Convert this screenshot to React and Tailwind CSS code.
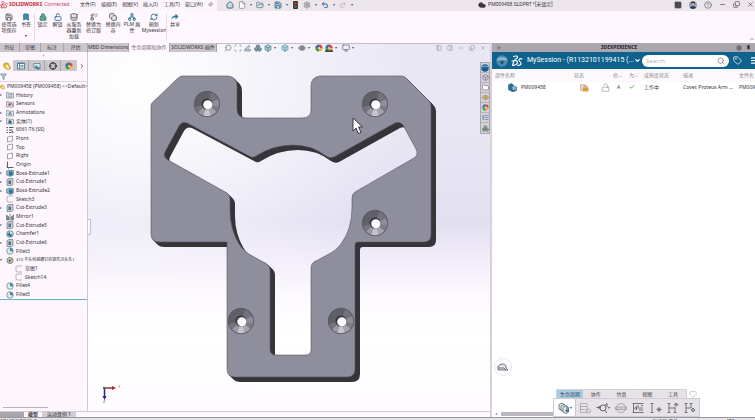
import React from "react";
import {
  Home, File, FolderOpen, Save, Undo2, Redo2, Pin, Search, Tag, Menu, ChevronDown, ChevronRight,
  Bookmark, Lock, LockOpen, RefreshCw, Database, Replace, Copy, Network, Monitor, Eye, Box,
  Boxes, Heart, Minus, X, CircleHelp, Cloud, Check, Crosshair, Filter, Settings,
  ListTree, PanelLeft, PanelRight, ChevronUp, SquareTerminal, ChevronsRight, Folder, Scan,
} from "lucide-react";

const BLUE = "#2f7f9f";

const MENUS = ["文件(F)", "编辑(E)", "视图(V)", "插入(I)", "工具(T)", "窗口(W)"];

function Caret() {
  return <span className="text-[4px] leading-none text-[#55505a]">▾</span>;
}

function TrafficLight() {
  return (
    <svg viewBox="0 0 6 10" className="h-2 w-[5px]">
      <rect width="6" height="10" rx="1" fill="#33302f" />
      <circle cx="3" cy="3" r="1.8" fill="#c3362e" />
      <circle cx="3" cy="7" r="1.8" fill="#3a7c3a" />
    </svg>
  );
}

function Ball({ className, scene }) {
  return (
    <svg viewBox="0 0 10 10" className={className}>
      <path d="M5 5V.5A4.500 4.500 0 0 1 9.500 5Z" fill="#d9483b" />
      <path d="M5 5H9.500A4.500 4.500 0 0 1 5 9.500Z" fill="#e8b63e" />
      <path d="M5 5V9.500A4.500 4.500 0 0 1 .5 5Z" fill="#3f9c55" />
      <path d="M5 5H.5A4.500 4.500 0 0 1 5 .5Z" fill="#3a6ea8" />
      <circle cx="5" cy="5" r="1.400" fill="#fff" opacity=".7" />
      {scene && <path d="M0 10V8l2-1 3 1 3-1 2 1v2Z" fill="#4a4d52" />}
    </svg>
  );
}

function DsLogo({ className, color }) {
  return (
    <svg viewBox="0 0 24 24" className={className} fill="none" stroke={color} strokeWidth="2.300" strokeLinecap="round" strokeLinejoin="round">
      <path d="M5 3c4-2 9-1 8 2-.6 2-3 3-5 3.500" />
      <path d="M6 11 3 21c5 0 10-3 10-6.500C13 11 8 10 2 12" />
      <path d="M22 8c-4-1.500-7 0-6 3 .7 2 4 3 4 6s-3 4-7 3.500" />
    </svg>
  );
}

function PartIcon({ className }) {
  return (
    <svg viewBox="0 0 12 12" className={className}>
      <path d="M1 3 4 1l4 1 1 3 2 2v3L8 11.500 4 10 1 7Z" fill="#e3b530" stroke="#a87a16" strokeWidth=".7" />
      <path d="m4 5 3-1 1 3 2 1-2 2-3-1Z" fill="#fff3b0" />
    </svg>
  );
}

function TitleBar() {
  return (
    <header className="flex h-[11px] shrink-0 items-center bg-[#ece6ec] pb-[2px] text-[5px] leading-none text-[#3a363c]">
      <div className="-mb-[2px] flex h-[11px] w-[217px] shrink-0 items-center bg-[#fdf5fc] pb-[2px]">
        <DsLogo className="h-2 w-2 shrink-0" color="#c1272d" />
        <span className="ml-px font-bold text-[#c22a35]">SOLIDWORKS</span>
        <span className="ml-[2px] text-[#c24a58]">Connected</span>
        <nav className="ml-auto flex gap-1 pr-[6px]">
          {MENUS.map((m) => (
            <button key={m} className="w-[17px] whitespace-nowrap text-left">{m}</button>
          ))}
        </nav>
        <Pin className="mr-1 h-[5px] w-[5px] rotate-45" />
      </div>
      <div className="flex items-center gap-1 pl-[9px]">
        <Home className="h-2 w-2 fill-[#c8dbe4] text-[#38566a]" strokeWidth={2.5} />
        <File className="h-2 w-2 fill-white text-[#77727a]" /><Caret />
        <FolderOpen className="h-2 w-2 fill-[#d4e2e8] text-[#4b7284]" /><Caret />
        <Save className="h-2 w-2 fill-[#b8d4e0] text-[#2d6d8c]" strokeWidth={2.5} /><Caret />
        <span className="mx-px"><TrafficLight /></span>
        <Settings className="h-2 w-2 fill-[#c3bec6] text-[#8b868e]" /><Caret />
        <Undo2 className="h-2 w-2 text-[#2f6f99]" strokeWidth={3} /><Caret />
        <Redo2 className="h-2 w-2 text-[#c2bcc4]" strokeWidth={3} /><Caret />
      </div>
      <div className="flex flex-1 items-center gap-[2px] pl-[125px]">
        <Cloud className="h-2 w-2 fill-[#3a363c]" />
        <span className="whitespace-nowrap font-[Roboto,'Noto_Sans_CJK_SC',sans-serif]">PM009458.SLDPRT *[未锁定]</span>
      </div>
      <div className="flex items-center gap-[7px] pr-px">
        <SquareTerminal className="h-2 w-2 fill-[#4a474d] text-[#4a474d]" />
        <svg viewBox="0 0 16 16" className="h-2 w-2">
          <circle cx="8" cy="8" r="8" fill="#8ba4bf" />
          <path d="M2 14c1-5 11-5 12 0l-6 2Z" fill="#26385a" />
          <circle cx="8" cy="6" r="3" fill="#d6a283" />
          <path d="M4 7c-1-8 9-8 8 0l-2-3H6Z" fill="#2b2325" />
        </svg>
        <CircleHelp className="h-2 w-2 text-[#656068]" />
        <Minus className="h-[7px] w-[7px]" />
        <Copy className="h-[7px] w-[7px] -scale-x-100 rotate-180" />
        <X className="h-[7px] w-[7px]" />
      </div>
    </header>
  );
}

const RIBBON = [
  { icon: Save, lines: ["使用选", "项保存"], w: "w-[18px]", gray: true },
  { icon: Bookmark, lines: ["书签"], w: "w-4", fill: true, caret: true, sep: true },
  { icon: Lock, lines: ["锁定"], w: "w-[15px]", green: true },
  { icon: LockOpen, lines: ["解锁"], w: "w-[15px]" },
  { icon: Database, lines: ["从服务", "器重新", "加载"], w: "w-[18px]", gray: true },
  { icon: Replace, lines: ["替换为", "修订版"], w: "w-[21px]", gray: true },
  { icon: Copy, lines: ["替换内", "容"], w: "w-[18px]", gray: true },
  { icon: Network, lines: ["PLM 属", "性"], w: "w-5" },
  { icon: RefreshCw, lines: ["刷新", "Mysession"], w: "w-6", sep: true },
  { icon: null, lines: ["共享"], w: "w-4" },
];

function Ribbon() {
  return (
    <section className="flex h-8 shrink-0 bg-[#fef7fe] pt-[2px] text-[5px] leading-[6px] text-[#37333a]">
      {RIBBON.map((r) => (
        <React.Fragment key={r.lines.join("")}>
          <button className={`${r.w} flex shrink-0 flex-col items-center`}>
            {r.icon ? (
              <r.icon
                className={`h-2 w-2 shrink-0 ${r.green ? "fill-[#63a86c] text-[#2f7f9f]" : r.gray ? "fill-[#dfe3e8] text-[#57535b]" : "text-[#256b88]"} ${r.fill ? "fill-[#3a8fb4]" : ""}`}
                strokeWidth={2.5}
              />
            ) : (
              <svg viewBox="0 0 16 16" className="h-2 w-2 shrink-0">
                <path d="M1 14c0-6 3-9 8-9V1l6 6-6 6V9c-4 0-6 1-8 5Z" fill={BLUE} />
              </svg>
            )}
            {r.lines.map((l) => <span key={l} className="whitespace-nowrap">{l}</span>)}
            {r.caret && <span className="mt-[7px] text-[4px] leading-none">▾</span>}
          </button>
          {r.sep && <i className="h-7 w-px shrink-0 bg-[#e3dbe4]" />}
        </React.Fragment>
      ))}
      <div className="flex flex-1 items-end justify-end pb-px"><ChevronUp className="h-[6px] w-[6px]" /></div>
    </section>
  );
}

const TABS = [
  ["特征", "w-5"], ["草图", "w-[21px]"], ["标注", "w-[23px]"], ["评估", "w-6"],
  ["MBD Dimensions", "w-[41px]"], ["生命周期和协作", "w-[41px]"], ["SOLIDWORKS 插件", "w-[47px]"],
];

function CommandTabs() {
  return (
    <div className="flex h-[9px] shrink-0 text-[5px] leading-none text-[#3c383f]">
      <div className="flex">
        {TABS.map(([t, w], i) => (
          <button key={t} className={`${w} whitespace-nowrap border-r border-[#aaa3ab] text-center ${i === 5 ? "bg-[#fef7fe] text-[#6c666e]" : "bg-[#cbc5cc]"}`}>{t}</button>
        ))}
      </div>
      <div className="flex flex-1 items-center gap-[2px] border-t border-[#c4bfc8] pl-[7px] text-[#7a8790]">
        <Search className="h-2 w-2 -scale-x-100" strokeWidth={2.5} />
        <Scan className="h-2 w-2" />
        <svg viewBox="0 0 16 16" className="h-2 w-2" fill="#c5d6dd" stroke="#6f8690" strokeWidth="1.300">
          <path d="M2 10 9 3l3 1-5 7ZM2 10l-1 4h12v-3H7" />
        </svg>
        <Boxes className="h-2 w-2 fill-[#a8bbc4] text-[#557584]" />
        <Box className="h-2 w-2 fill-[#a9ccd9] text-[#4b7b8d]" /><Caret />
        <Box className="ml-[3px] h-2 w-2 fill-[#b4d6e2] text-[#5a8ea3]" /><Caret />
        <Eye className="ml-[3px] h-2 w-2 fill-[#b8b5bd] text-[#4e4b52]" /><Caret />
        <Ball className="ml-[3px] h-2 w-2" />
        <Ball className="h-2 w-2" scene /><Caret />
        <Monitor className="ml-[3px] h-2 w-2 text-[#625e69]" /><Caret />
        <div className="ml-auto flex gap-1 pr-1 text-[#8e8997]">
          <PanelLeft className="h-[6px] w-[6px]" />
          <PanelRight className="ml-px h-[6px] w-[6px]" />
          <Minus className="ml-px h-[6px] w-[6px]" />
          <Copy className="ml-px h-[6px] w-[6px] -scale-x-100 rotate-180" />
          <X className="ml-px h-[6px] w-[6px]" />
        </div>
      </div>
    </div>
  );
}

const TREE = [
  ["folder", "History", 1], ["sensor", "Sensors"], ["note", "Annotations", 1], ["solid", "实体(1)", 1],
  ["material", "6061-T6 (SS)"], ["plane", "Front"], ["plane", "Top"], ["plane", "Right"], ["origin", "Origin"],
  ["boss", "Boss-Extrude1", 1], ["cut", "Cut-Extrude1", 1], ["boss", "Boss-Extrude2", 1], ["sketch", "Sketch3"],
  ["cut", "Cut-Extrude3", 1], ["mirror", "Mirror1"], ["cut", "Cut-Extrude5", 1], ["chamfer", "Chamfer1"],
  ["cut", "Cut-Extrude6", 1], ["fillet", "Fillet3"], ["hole", "#10 平头机械螺钉的锥形沉头孔1", 1],
  ["sketch", "草图1", 0, 1], ["sketch", "Sketch14", 0, 1], ["fillet", "Fillet4"], ["fillet", "Fillet5"],
];

const folderShape = <path d="M1 3h4l1 1.500h9V14H1Z" fill="#dfe0e4" stroke="#77777f" strokeWidth="1.200" />;

const TREE_ART = {
  folder: <>{folderShape}<circle cx="8" cy="9" r="3.200" fill="#fff" stroke="#4d7b92" strokeWidth="1.300" /><path d="M8 7v2l2 1" stroke="#4d7b92" fill="none" /></>,
  sensor: <>{folderShape}<circle cx="7" cy="9" r="2.600" fill="#b34b54" /><path d="M10 6l3 5" stroke="#555" strokeWidth="1.500" /></>,
  note: <>{folderShape}<path d="m5 12 3-6 3 6M6 10h4" fill="none" stroke="#2d7695" strokeWidth="1.500" /></>,
  solid: <>{folderShape}<path d="M5 7h6v6H5Z" fill="#226a8c" /></>,
  material: <path d="M1 3h3M1 8h3M1 13h3M6 3h9M6 8h7M6 13h5M12 10l2 4" stroke="#4b5d58" strokeWidth="2.200" />,
  plane: <path d="m3 4 10-2v10L3 14Z" fill="#fbfafc" stroke="#77757c" strokeWidth="1.300" />,
  origin: <path d="M3 1v12h12M1 11l4 4" fill="none" stroke="#44424a" strokeWidth="1.700" />,
  boss: <><path d="m1 4 5-2 9 1v9l-6 3-8-3Z" fill="#8fb4c4" stroke="#4b6875" /><path d="M6 5h7v8H6Z" fill="#257699" /></>,
  cut: <><path d="m2 3 4-2h8v12l-3 2H2Z" fill="#c9cbd1" stroke="#606670" strokeWidth="1.200" /><path d="M5 5h5v7H5Z" fill="#40788f" /></>,
  sketch: <path d="M14 2H5Q2 2 2 5v6q0 3 3 3h9" fill="none" stroke="#8e8991" strokeWidth="1.300" />,
  mirror: <><path d="M1 14V4l5 4v6ZM15 14V4l-5 4v6Z" fill="#7d8d96" stroke="#505860" /><path d="M8 1v14" stroke="#333" /></>,
  chamfer: <><circle cx="8" cy="8" r="6.500" fill="#dfe6ea" stroke="#4b6470" strokeWidth="1.500" /><path d="M2 9 8 3v5l5 1-4 5Z" fill="#267397" /></>,
  fillet: <><circle cx="8" cy="8" r="6.500" fill="#e3e7ea" stroke="#62757f" strokeWidth="1.300" /><path d="M8 2q6 0 6 7L8 8Z" fill="#3689a9" /></>,
  hole: <><circle cx="8" cy="9" r="6" fill="#cfd8de" stroke="#4d6470" strokeWidth="1.500" /><path d="m5 12 7-9 3 2-7 8Z" fill="#d99337" /><circle cx="7" cy="9" r="2" fill="#255f7b" /></>,
};

function FeatureTree() {
  return (
    <aside className="flex w-[88px] shrink-0 flex-col overflow-hidden border-r border-[#cfc8d2] bg-[#fdf6fd] text-[5px] text-[#37333a]">
      <div className="flex h-2 items-center justify-center text-[5px] leading-none text-[#8e8890]">•</div>
      <div className="flex h-[11px] shrink-0 bg-[#ccc6cd]">
        <button className="flex w-[13px] items-center justify-center bg-[#fdf6fd]"><PartIcon className="h-2 w-2" /></button>
        <button className="flex w-4 items-center justify-center border-r border-[#aaa4ac]">
          <svg viewBox="0 0 16 16" className="h-2 w-2"><path d="M1 2h14v12H1Z" fill="#f1f6f8" stroke="#37718c" strokeWidth="1.600" /><path d="M1 3h14M5 3v11M7 7h6M7 10h6" stroke="#37718c" strokeWidth="1.600" /></svg>
        </button>
        <button className="flex w-4 items-center justify-center border-r border-[#aaa4ac]">
          <svg viewBox="0 0 16 16" className="h-2 w-2"><path d="M2 3h12v9H2Z" fill="#e4edf1" stroke="#54717e" strokeWidth="1.400" /><path d="M3 11 7 6l3 4 5 3v2H8Z" fill="#4288a3" /></svg>
        </button>
        <button className="flex w-4 items-center justify-center border-r border-[#aaa4ac]"><Crosshair className="h-2 w-2 text-[#2e2b30]" strokeWidth={3} /></button>
        <button className="flex w-4 items-center justify-center"><Ball className="h-2 w-2" /></button>
        <button className="flex flex-1 items-center justify-center bg-[#fdf6fd]"><ChevronRight className="h-[6px] w-[6px]" strokeWidth={3} /></button>
      </div>
      <div className="flex h-[11px] shrink-0 items-center border-b border-[#ddd5de]">
        <Filter className="h-[7px] w-[7px] fill-[#a8ccd8] text-[#477888]" />
      </div>
      <div className="flex h-[9px] shrink-0 items-center gap-[2px] whitespace-nowrap">
        <PartIcon className="h-[6px] w-[5px] shrink-0" />PM009458 (PM009458) &lt;&lt;Default&gt;
      </div>
      <ul className="grid h-[209px] shrink-0 auto-rows-fr border-b border-[#6fb2c8]">
        {TREE.map(([kind, label, open, nested]) => (
          <li key={label} className={`flex items-center whitespace-nowrap leading-none ${nested ? "pl-[9px]" : ""} ${kind === "hole" ? "text-[4px]" : ""}`}>
            <span className="w-[6px] shrink-0 text-[4px] leading-none text-[#625d66]">{open ? (kind === "hole" ? "▾" : "▸") : ""}</span>
            <svg viewBox="0 0 16 16" className="mr-[2px] h-2 w-2 shrink-0">{TREE_ART[kind]}</svg>
            {label}
          </li>
        ))}
      </ul>
      <div className="mb-[3px] ml-[3px] mt-auto h-px w-[45px] bg-[#b9b2ba]" />
    </aside>
  );
}

const PLATE =
  "M151 106Q151 104 152 103L178 78Q180 76 183 76H228Q237 77 237 86V110Q238 118 246 118H302Q311 118 311 110V86Q311 77 320 76H402Q404 76 406 78L429 101Q431 103 431 106V235Q431 242 424 242H358Q355 242 355 245V369Q355 377 347 377H235Q227 377 227 369V242H159Q151 242 151 234Z" +
  "M165 152L179 126Q182 121 187 123L251 157Q253 158 256 156Q273 145 293 145Q312 145 326 156Q330 159 334 157L395 123Q400 121 403 125L416 149Q419 155 414 158L355 192Q352 194 352 198V208Q352 229 341 244Q336 251 327 255L314 262Q311 264 311 268V350Q311 355 305 355H276Q270 355 270 349V270Q270 266 267 264L254 257Q244 252 239 244Q230 229 230 211V199Q230 195 227 193L168 160Q163 157 165 152Z";

const HOLES = [[207, 104], [375, 104], [375, 223], [241, 321], [341, 321]];

function Countersink({ x, y }) {
  return (
    <g transform={`translate(${x} ${y})`}>
      <circle r="12.800" fill="#5f5f68" stroke="#4c4c55" strokeWidth=".6" />
      <path d="M0 0 12 3A12.300 12.300 0 0 1 9.500 7.800Z" fill="#7d7c86" />
      <path d="M0 0 9.500 7.800A12.300 12.300 0 0 1 4 11.600Z" fill="#a5a4ae" />
      <path d="M0 0 4 11.600A12.300 12.300 0 0 1-4 11.600Z" fill="#c5c4ce" />
      <path d="M0 0-4 11.600A12.300 12.300 0 0 1-9 8.300Z" fill="#9b9aa5" />
      <path d="M0 0-9 8.300A12.300 12.300 0 0 1-12 3Z" fill="#777680" />
      <path d="M0 0 12 3A12.300 12.300 0 0 0 11-5Z" fill="#908f99" />
      <path d="M0 0 11-5A12.300 12.300 0 0 0 4-11.600Z" fill="#73727c" />
      <circle r="5.500" fill="#34343a" />
      <circle cx=".8" cy=".8" r="4.600" fill="#fbfaff" />
    </g>
  );
}

function ModelView() {
  return (
    <svg viewBox="88 52 402 359" preserveAspectRatio="xMidYMid meet" className="h-full w-full" role="img" aria-label="PM009458">
      {[5, 4, 3, 2, 1].map((d) => (
        <path key={d} d={PLATE} fillRule="evenodd" fill="#35353a" transform={`translate(${d} ${d})`} />
      ))}
      <path d={PLATE} fillRule="evenodd" fill="#8f8e9c" stroke="#55555f" strokeWidth=".6" />
      {HOLES.map(([x, y]) => <Countersink key={`${x}-${y}`} x={x} y={y} />)}
      <path d="M353 118v13l3-3 2.500 5.500 2.500-1-2.500-5.500h4Z" fill="#fff" stroke="#29282e" strokeWidth=".9" />
      <path d="M104 388h9" stroke="#ad2431" strokeWidth="1.500" />
      <path d="m112 386 4 2-4 2Z" fill="#ad2431" />
      <path d="M104.500 388v9" stroke="#24248c" strokeWidth="1.500" />
      <path d="m102.500 396 2 4 2-4Z" fill="#24248c" />
      <circle cx="104" cy="388" r="1.200" fill="#2f8050" />
      <text x="118" y="388" fontSize="4" fill="#b36a74">X</text>
      <text x="103" y="403" fontSize="4" fill="#4a4a8c">Z</text>
    </svg>
  );
}

function SideStrip() {
  const cell = "flex h-[10px] items-center justify-center border-b border-[#b8b3be] last:border-b-0";
  return (
    <div className="absolute right-0 top-[10px] w-[10px] border border-[#aaa5b0] bg-[#d5d0da]">
      <div className={cell}>
        <svg viewBox="0 0 16 16" className="h-2 w-2"><circle cx="8" cy="8" r="7.500" fill="#175f8b" /><path d="M1 6q7-4 14 0" fill="none" stroke="#8cc0dc" strokeWidth="2" /></svg>
      </div>
      <div className={cell}><Box className="h-[7px] w-[7px] text-[#666270]" /></div>
      <div className={cell}><Folder className="h-[7px] w-[7px] fill-white text-[#666270]" /></div>
      <div className={cell}><Eye className="h-[7px] w-[7px] fill-[#e1d373] text-[#77703a]" /></div>
      <div className={cell}><Ball className="h-[7px] w-[7px]" /></div>
      <div className={cell}><ListTree className="h-[7px] w-[7px] text-[#2e718f]" /></div>
      <div className={cell}><Boxes className="h-[7px] w-[7px] fill-[#bfd07a] text-[#55737b]" /></div>
    </div>
  );
}

function ExperiencePane() {
  return (
    <aside className="flex w-[265px] shrink-0 flex-col overflow-hidden border-l-2 border-[#d8d0da] bg-white">
      <div className="flex h-[9px] shrink-0 items-center bg-[#aca6af] px-1 text-[5px] font-bold leading-none text-[#28252b]">
        <ChevronsRight className="h-[6px] w-[6px]" />
        <span className="flex-1 text-center">3DEXPERIENCE</span>
        <Settings className="h-[6px] w-[6px]" />
        <Pin className="ml-1 h-[5px] w-[5px] fill-current" />
      </div>
      <div className="flex h-[17px] shrink-0 items-center bg-[#0f628d] pl-1 text-white">
        <svg viewBox="0 0 24 24" className="h-3 w-3 shrink-0">
          <circle cx="12" cy="12" r="11.500" fill="#4d89ad" />
          <path d="M3 7q9-5 18 0v5q-9-5-18 0Z" fill="#8fb9d0" />
          <path d="m8 13 4 6 4-6Z" fill="#123f5e" />
        </svg>
        <DsLogo className="ml-[3px] h-3 w-3 shrink-0" color="#ffffff" />
        <span className="ml-1 whitespace-nowrap font-[Roboto,sans-serif] text-[7px]">MySession - (R1132101199415 (...</span>
        <ChevronDown className="ml-auto h-[7px] w-[7px] shrink-0" strokeWidth={4} />
        <label className="ml-px flex h-3 w-[87px] shrink-0 items-center rounded-full bg-white px-1 text-[#6e6a72]">
          <input aria-label="Search" placeholder="Search" className="w-0 flex-1 bg-transparent text-[6px] leading-none outline-none placeholder:text-[#b8b4bc]" />
          <Search className="h-2 w-2" />
        </label>
        <Tag className="ml-1 h-[9px] w-[9px] shrink-0" />
        <button className="relative ml-2 mr-px shrink-0" aria-label="菜单">
          <Menu className="h-[9px] w-[9px]" strokeWidth={3} />
          <i className="absolute -right-px -top-[2px] h-[5px] w-[3px] rounded-l-full bg-[#e49a37]" />
        </button>
      </div>
      <table className="w-full shrink-0 table-fixed border-collapse text-left text-[5px] leading-none text-[#37333a]">
        <colgroup>
          <col className="w-[82px]" /><col className="w-[39px]" /><col className="w-4" /><col className="w-[15px]" />
          <col className="w-[39px]" /><col className="w-[56px]" /><col className="w-4" />
        </colgroup>
        <thead>
          <tr className="h-[13px] bg-[#fbf9fb] text-[#8d8890]">
            {["部件名称", "状态", "修...", "为...", "成熟度状态", "描述", "文件名"].map((h, i) => (
              <th key={h} className={`overflow-hidden whitespace-nowrap p-0 font-normal ${i === 0 ? "pl-[3px]" : ""}`}>{h}</th>
            ))}
          </tr>
        </thead>
        <tbody>
          <tr className="h-[10px]">
            <td className="p-0 pl-4">
              <div className="flex items-center gap-1">
                <svg viewBox="0 0 16 16" className="h-[9px] w-[9px]">
                  <path d="m1 3 6-2 3 4 5 2v6l-6 3-8-4Z" fill="#2e7197" stroke="#1d4f6d" />
                  <circle cx="11" cy="9" r="3.500" fill="#8dbad3" />
                </svg>
                PM009458
              </div>
            </td>
            <td className="p-0 pl-[6px]">
              <div className="flex items-center gap-3">
                <svg viewBox="0 0 16 16" className="h-[9px] w-[9px]">
                  <path d="M1 3h8l2 2v8H1Z" fill="#e9dcc8" stroke="#a58b69" />
                  <path d="M7 9V7q3-4 6 0v2" fill="none" stroke="#b07a2c" strokeWidth="1.500" />
                  <path d="M5 9h10v6H5Z" fill="#e39a33" />
                </svg>
                <LockOpen className="h-[9px] w-[9px] -scale-x-100 text-[#a29ca4]" />
              </div>
            </td>
            <td className="p-0 pl-1">A</td>
            <td className="p-0"><Check className="h-[6px] w-[6px] text-[#55a957]" strokeWidth={4} /></td>
            <td className="p-0">工作中</td>
            <td className="whitespace-nowrap p-0">Cover, Proteus Arm ...</td>
            <td className="overflow-hidden whitespace-nowrap p-0">PM009458</td>
          </tr>
        </tbody>
      </table>
      <div className="mt-auto flex pl-[2px]">
        <button aria-label="助手" className="mb-[13px] flex h-[18px] w-[18px] items-center justify-center rounded-full border border-[#eee2ef] bg-white">
          <svg viewBox="0 0 24 16" className="h-2 w-3" fill="#e6e5ea" stroke="#5d5a63" strokeWidth="1.700">
            <path d="M2 14V8q2-6 8-6h4q4 1 5 9l3 3ZM2 10h12l4 4" />
          </svg>
        </button>
      </div>
      <div className="flex h-7 shrink-0 items-end">
        <div className="mb-px flex flex-1 items-center gap-px text-[#756f78]">
          <span className="w-2 text-center text-[4px] leading-none">◂</span>
          <i className="h-1 flex-1 bg-[#bdb8bf]" />
        </div>
        <LifecycleBar />
        <div className="w-[55px]" />
      </div>
    </aside>
  );
}

function LifecycleBar() {
  const tabs = ["生命周期", "协作", "仿真", "视图", "工具"];
  const cls = "h-3 w-3";
  return (
    <div className="flex w-[147px] flex-col text-[5px] leading-none text-[#46424a]">
      <div className="flex h-[9px] items-center pl-[3px]">
        <div className="flex h-full w-[131px] border border-b-0 border-[#d6d1d8] bg-[#e6e2e8]">
          {tabs.map((t, i) => (
            <button key={t} className={`flex-1 ${i === 0 ? "bg-[#a5cde4]" : ""}`}>{t}</button>
          ))}
        </div>
        <Heart className="ml-[2px] h-2 w-2 text-[#b6b1b9]" />
      </div>
      <div className="flex h-[19px] items-center border border-[#d0cbd2] bg-[#e5e2e8] text-[#77747d]">
        <button className="flex h-full w-[22px] items-center justify-center border-r border-[#cbc6cd] bg-white">
          <svg viewBox="0 0 24 24" className={cls} fill="#e8edf0" stroke="#4d565f" strokeWidth="1.500">
            <path d="m2 5 6-3 5 3v9l-5 3-6-3Z" /><path d="m6 8 6-3 5 3v9l-5 3-6-3Z" /><path d="m10 11 6-3 5 3v9l-5 3-6-3Z" />
            <path d="M18 10v9m-3-3 3 3 4-3" stroke="#267b9d" strokeWidth="2.500" />
          </svg><Caret />
        </button>
        <div className="flex flex-1 items-center justify-around">
          <svg viewBox="0 0 24 24" className={cls} fill="none" stroke="#aaa6ae" strokeWidth="1.700"><path d="M3 3h13v18H3ZM3 9h13M3 15h10" /><circle cx="19" cy="18" r="4" /></svg>
          <span className="flex items-center">
            <svg viewBox="0 0 24 24" className={cls} fill="none" stroke="#65626c" strokeWidth="2"><circle cx="14" cy="12" r="6" /><path d="m18 17 4 5M1 11h7M5 8l4 3-4 3M17 7l5-4v7" /></svg><Caret />
          </span>
          <svg viewBox="0 0 24 24" className={cls} fill="none" stroke="#a19da6" strokeWidth="1.700"><circle cx="12" cy="12" r="9" /><path d="M1 10h22v5H1ZM5 12.500h2M10 12.500h4M17 12.500h2" /></svg>
          <svg viewBox="0 0 24 24" className={cls} fill="none" stroke="#77737c" strokeWidth="2"><path d="M3 2v20M1 3h22M1 21h22M9 8h5M10 12h12M14 16h8M18 7h4M5 12l4-3v7Z" /></svg>
          <svg viewBox="0 0 24 24" className={cls} fill="none" stroke="#77737c" strokeWidth="2"><path d="M4 3v18M1 3h6M1 21h6M18 11l-4 4 4 4 4-4ZM18 11v8M14 15h8" /></svg>
          <svg viewBox="0 0 24 24" className={cls} fill="none" stroke="#77737c" strokeWidth="2"><path d="M4 3v18M1 3h6M1 21h6M4 12h12M16 10v11M13 21h6M18 2v7M14 6h9M15 5l3-3 3 3" /></svg>
          <svg viewBox="0 0 24 24" className={cls} fill="none" stroke="#77737c" strokeWidth="2"><path d="M4 3v18M1 3h6M1 21h6M4 12h10M14 3v9M11 3h6M18 12l-4 4 4 4 4-4ZM18 12v8" /></svg>
        </div>
      </div>
    </div>
  );
}

export default function App() {
  return (
    <div className="flex h-screen flex-col overflow-hidden bg-[#fdf6fd] font-['Noto_Sans','Noto_Sans_CJK_SC',sans-serif]">
      <TitleBar />
      <Ribbon />
      <main className="flex min-h-0 flex-1">
        <div className="flex min-w-0 flex-1 flex-col bg-[radial-gradient(ellipse_at_28%_10%,#ffffff_0%,#ffffff00_55%),linear-gradient(to_bottom,#eae7f4_0%,#e9e6f4_25%,#e2dff1_48%,#f3eefa_59%,#fdfaff_68%,#ffffff_78%,#fffcff_100%)]">
          <CommandTabs />
          <div className="flex min-h-0 flex-1">
            <FeatureTree />
            <div className="relative min-w-0 flex-1">
              <ModelView />
              <SideStrip />
              <button aria-label="折叠" className="absolute left-0 top-[167px] h-4 w-[3px] border border-l-0 border-[#c8c2cc] bg-[#fdf6fd]" />
            </div>
          </div>
          <div className="flex h-[6px] shrink-0 border-t border-[#d3ccd4] bg-[#fdf8fd] text-[5px] leading-none text-[#37333a]">
            <div className="w-6 bg-[#aaa4ac]" />
            <button className="w-[18px] bg-[#fdf6fd] font-bold">模型</button>
            <button className="w-[34px] bg-[#d2ccd3]">运动算例 1</button>
          </div>
        </div>
        <ExperiencePane />
      </main>
      <footer className="flex h-[3px] shrink-0 overflow-hidden border-t border-[#8f9aa2] bg-[#e9e3e9] text-[5px] leading-[6px] text-[#4b474e]">
        <span className="flex-1">SOLIDWORKS Connected</span>
        <span className="w-[75px]">在编辑 零件</span>
        <span className="w-[28px]">IPS</span>
      </footer>
    </div>
  );
}
